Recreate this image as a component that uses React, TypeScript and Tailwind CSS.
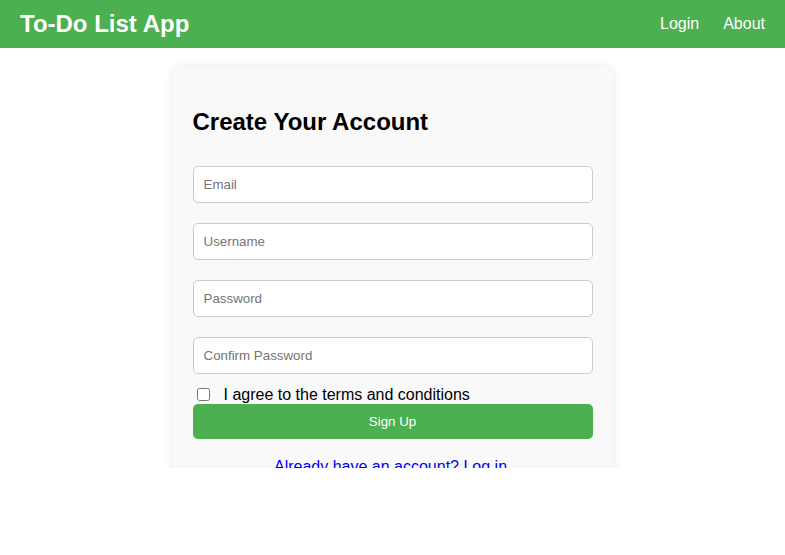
import React from "react";

export default function App() {
  const font = { fontFamily: '"Liberation Sans", Arial, sans-serif' };
  return (
    <div className="min-h-[555px] bg-white" style={font}>
      <header className="flex h-12 items-center justify-between bg-[#4CAF50] px-5 text-white">
        <h1 className="text-2xl font-bold leading-7">To-Do List App</h1>
        <nav className="flex gap-6 text-base">
          <a href="#">Login</a>
          <a href="#">About</a>
        </nav>
      </header>
      <div className="h-[420px] overflow-hidden">
        <div className="mx-auto mt-[19px] w-[440px] rounded-lg bg-[#f9f9f9] px-5 pt-[21px] pb-10 shadow-[0_0_10px_rgba(0,0,0,0.1)]">
          <h2 className="mt-5 mb-[30px] text-2xl font-bold leading-7 text-black">Create Your Account</h2>
          <div className="flex flex-col gap-5">
            {["Email", "Username", "Password", "Confirm Password"].map((p) => (
              <input
                key={p}
                placeholder={p}
                type={p.includes("Password") ? "password" : "text"}
                className="block h-[37px] w-full rounded-[5px] border border-[#ccc] bg-white px-[10px] text-[13.33px] placeholder:text-[#757575]"
              />
            ))}
          </div>
          <label className="mt-[11px] flex h-[19px] items-center text-base leading-[18px] text-black">
            <input type="checkbox" className="ml-1 mr-[14px] h-[13px] w-[13px]" />
            I agree to the terms and conditions
          </label>
          <button className="block h-[35px] w-full rounded-[5px] bg-[#4CAF50] text-[13.33px] text-white">
            Sign Up
          </button>
          <p className="mt-[19px] pr-1 text-center text-base leading-[18px]">
            <a href="#" className="text-[#0000EE]">Already have an account? Log in</a>
          </p>
        </div>
      </div>
    </div>
  );
}
